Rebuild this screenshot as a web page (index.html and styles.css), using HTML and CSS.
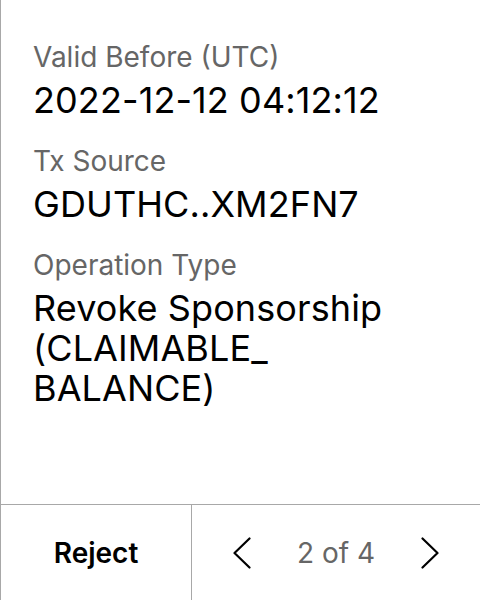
FILE: index.html
```html
<!DOCTYPE html>
<html lang="en">
<head>
<meta charset="utf-8">
<link rel="stylesheet" href="styles.css">
</head>
<body>
<div class="card">
  <div class="details">
    <div class="field">
      <div class="label">Valid Before (UTC)</div>
      <div class="value">2022-12-12 04:12:12</div>
    </div>
    <div class="field">
      <div class="label">Tx Source</div>
      <div class="value">GDUTHC..XM2FN7</div>
    </div>
    <div class="field">
      <div class="label">Operation Type</div>
      <div class="value">Revoke Sponsorship<br>(CLAIMABLE_<br>BALANCE)</div>
    </div>
  </div>
  <div class="footer">
    <button class="reject">Reject</button>
    <div class="pager">
      <button class="chev" aria-label="Previous">
        <svg width="18" height="32" viewBox="0 0 18 32"><path d="M16.5 1.5 L1.5 16 L16.5 30.5" fill="none" stroke="#000" stroke-width="2.2" stroke-linecap="round" stroke-linejoin="round"/></svg>
      </button>
      <span class="count">2 of 4</span>
      <button class="chev" aria-label="Next">
        <svg width="18" height="32" viewBox="0 0 18 32"><path d="M1.5 1.5 L16.5 16 L1.5 30.5" fill="none" stroke="#000" stroke-width="2.2" stroke-linecap="round" stroke-linejoin="round"/></svg>
      </button>
    </div>
  </div>
</div>
</body>
</html>
```
FILE: styles.css
```css
* { box-sizing: border-box; }
html, body { margin: 0; padding: 0; background: #fff; }
body { font-family: Inter, "Noto Sans", sans-serif; color: #000; }
.card {
  height: 600px;
  width: 480px;
  border-left: 1px solid #a8a8a8;
  display: flex;
  flex-direction: column;
}
.details {
  flex: 1;
  padding: 40px 24px 0 32px;
  display: flex;
  flex-direction: column;
  gap: 24px;
}
.field { display: flex; flex-direction: column; gap: 6px; }
.label {
  font-size: 28px;
  line-height: 34px;
  color: #666;
}
.value {
  font-size: 36px;
  line-height: 40px;
  letter-spacing: 0.1px;
  color: #000;
}
.footer {
  height: 96px;
  border-top: 1px solid #a8a8a8;
  display: grid;
  grid-template-columns: 191px 1fr;
}
.reject {
  border: 0;
  border-right: 1px solid #a8a8a8;
  background: none;
  font-family: inherit;
  font-size: 28px;
  font-weight: 600;
  color: #000;
  padding: 0;
}
.pager {
  display: flex;
  align-items: center;
  justify-content: center;
  gap: 46px;
}
.chev {
  border: 0;
  background: none;
  padding: 0;
  display: flex;
}
.count {
  font-size: 28px;
  color: #666;
}
```
